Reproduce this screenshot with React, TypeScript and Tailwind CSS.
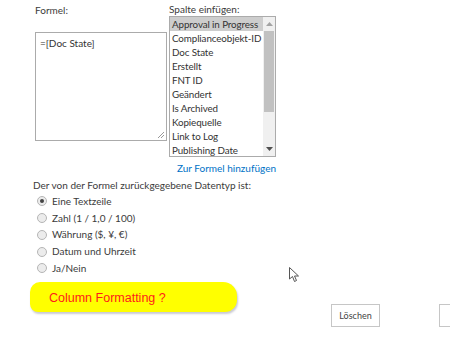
import React from 'react';

const columns = [
  'Approval in Progress',
  'Complianceobjekt-ID',
  'Doc State',
  'Erstellt',
  'FNT ID',
  'Geändert',
  'Is Archived',
  'Kopiequelle',
  'Link to Log',
  'Publishing Date',
];

const types = [
  'Eine Textzeile',
  'Zahl (1 / 1,0 / 100)',
  'Währung ($, ¥, €)',
  'Datum und Uhrzeit',
  'Ja/Nein',
];

function Radio({ checked }: { checked?: boolean }) {
  return (
    <span className="flex h-[10px] w-[10px] shrink-0 items-center justify-center rounded-full border border-[#b5b5b5] bg-[#ececec]">
      {checked && <span className="h-[4px] w-[4px] rounded-full bg-[#444]" />}
    </span>
  );
}

export default function App() {
  return (
    <div className="relative h-[337px] w-[450px] overflow-hidden bg-white font-['Lato',sans-serif] text-[#3b3b3b]">
      {/* Formula + column picker */}
      <div className="flex pl-[35px] pt-[2px]">
        <div className="w-[134px] shrink-0">
          <div className="text-[10px] leading-[16px]">Formel:</div>
          <div className="relative mt-[14px] h-[109px] w-[132px] border border-[#ababab] px-[4px] py-[2px] text-[10px] leading-[16px] text-[#333]">
            =[Doc State]
            <svg className="absolute bottom-[1px] right-[1px]" width="9" height="9" viewBox="0 0 9 9">
              <path d="M8 2 L2 8 M8 5 L5 8" stroke="#999" strokeWidth="1" />
            </svg>
          </div>
        </div>
        <div className="w-[107px] shrink-0">
          <div className="whitespace-nowrap text-[10px] leading-[14px]">Spalte einfügen:</div>
          <div className="flex h-[141px] w-[107px] border border-[#ababab]">
            <div className="flex-1 overflow-hidden">
              {columns.map((c, i) => (
                <div
                  key={c}
                  className={
                    'whitespace-nowrap pl-[2px] text-[9.8px] leading-[14px] tracking-[-0.1px] text-[#333] ' +
                    (i === 0 ? 'bg-[#cdcdcd]' : '')
                  }
                >
                  {c}
                </div>
              ))}
            </div>
            <div className="flex w-[12px] shrink-0 flex-col items-center bg-[#f0f0f0]">
              <svg className="mt-[5px]" width="7" height="4" viewBox="0 0 7 4">
                <path d="M0 4 L3.5 0 L7 4 Z" fill="#a3a3a3" />
              </svg>
              <div className="mt-[5px] h-[81px] w-[10px] bg-[#c1c1c1]" />
              <div className="flex-1" />
              <svg className="mb-[5px]" width="7" height="4" viewBox="0 0 7 4">
                <path d="M0 0 L7 0 L3.5 4 Z" fill="#505050" />
              </svg>
            </div>
          </div>
          <div className="mt-[3px] flex justify-end">
            <span className="whitespace-nowrap text-[10px] leading-[16px] text-[#0072c6]">Zur Formel hinzufügen</span>
          </div>
        </div>
      </div>

      {/* Return type */}
      <div className="mt-[1px] pl-[33px] text-[10px] leading-[16px]">Der von der Formel zurückgegebene Datentyp ist:</div>
      <div className="flex flex-col pl-[37px]">
        {types.map((t, i) => (
          <div key={t} className="flex h-[16.75px] items-center gap-[5px] text-[10px]">
            <Radio checked={i === 0} />
            <span>{t}</span>
          </div>
        ))}
      </div>

      {/* Annotation + buttons */}
      <div className="mt-[5px] flex items-start">
        <div className="ml-[30px] flex h-[30px] w-[207px] shrink-0 items-center rounded-[10px_14px_12px_8px] bg-[#ffff00] pl-[19px] pt-[3px] font-['Liberation_Sans',sans-serif] text-[12.5px] text-[#ff1a1a] shadow-[1px_2px_2px_rgba(80,80,110,0.3)]">
          Column Formatting ?
        </div>
        <button className="ml-[94px] mt-[22px] h-[23px] w-[49px] shrink-0 border border-[#c6c6c6] bg-white text-[9px] text-[#444]">
          Löschen
        </button>
        <button className="ml-[59px] mt-[22px] h-[23px] w-[49px] shrink-0 border border-[#c6c6c6] bg-white" />
      </div>

      {/* mouse cursor */}
      <svg className="absolute left-[289px] top-[267px]" width="12" height="16" viewBox="0 0 12 16">
        <path d="M0.5 0.5 L0.5 12 L3.5 9.5 L5.5 14.5 L7.5 13.5 L5.5 9 L9.5 9 Z" fill="white" stroke="#555" strokeWidth="1" />
      </svg>
    </div>
  );
}
